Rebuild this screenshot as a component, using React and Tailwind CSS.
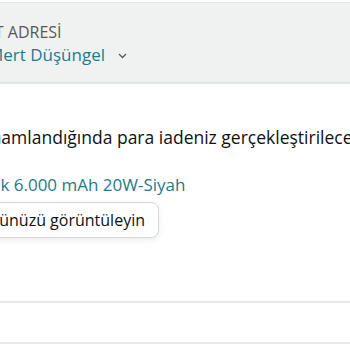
import React from 'react';

const App = () => {
    return (
        <div className="w-[350px] h-[350px] overflow-hidden bg-white" style={{ fontFamily: '"Open Sans", "Noto Sans", sans-serif' }}>
            {/* Address header */}
            <div className="mt-[2px] h-[82px] bg-[#f0f2f2] border-t border-b-2 border-[#e3e6e6] pt-[18px]">
                <div className="whitespace-nowrap -ml-[69px] text-[16px] leading-[22px] text-[#565959]">TESLİMAT ADRESİ</div>
                <div className="whitespace-nowrap -ml-[12px] flex items-center gap-[13px] text-[17px] leading-[24px] text-[#1f7a8a]">
                    <span>Mert Düşüngel</span>
                    <svg width="9" height="6" viewBox="0 0 9 6" className="mt-[2px]">
                        <path d="M1 1l3.5 3.5L8 1" fill="none" stroke="#565959" strokeWidth="1.3" />
                    </svg>
                </div>
            </div>

            {/* Return info */}
            <div className="pt-[41px]">
                <p className="whitespace-nowrap -ml-[146px] text-[17.5px] leading-[24px] text-[#0f1111]">
                    İade işleminiz tamamlandığında para iadeniz gerçekleştirilecek
                </p>
                <p className="whitespace-nowrap -ml-[80px] mt-[24px] text-[17px] leading-[24px] text-[#1f7a8a]">
                    Powerbank 6.000 mAh 20W-Siyah
                </p>
                <div className="-ml-[50px] mt-[5px]">
                    <button className="h-[36px] pl-[30px] pr-[13px] rounded-[8px] border border-[#d5d9d9] bg-white shadow-[0_2px_5px_rgba(213,217,217,0.5)] text-[16px] text-[#0f1111] whitespace-nowrap">
                        Ürünüzü görüntüleyin
                    </button>
                </div>
            </div>

            {/* Dividers */}
            <div className="mt-[63px] border-t-2 border-[#e7e7e7] h-[41px]"></div>
            <div className="border-t-2 border-[#e7e7e7]"></div>
        </div>
    );
};

export default App;
